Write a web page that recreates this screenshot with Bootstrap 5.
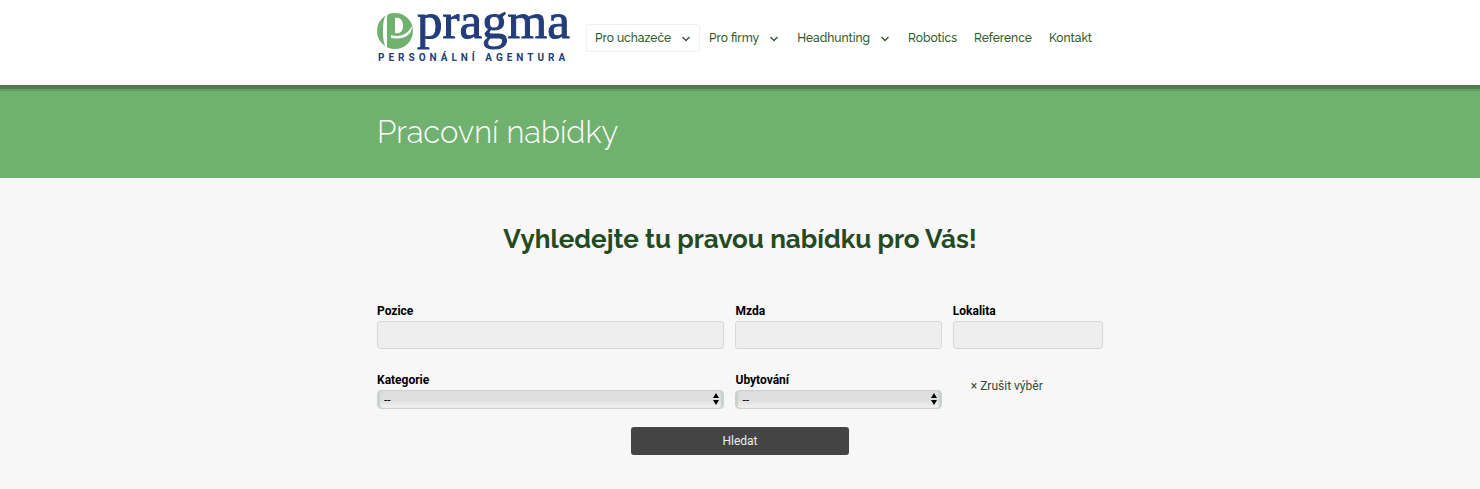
<!DOCTYPE html>
<html lang="cs">
<head>
<meta charset="utf-8">
<meta name="viewport" content="width=device-width, initial-scale=1">
<title>Pracovní nabídky – Pragma</title>
<link href="https://cdn.jsdelivr.net/npm/bootstrap@5.3.0/dist/css/bootstrap.min.css" rel="stylesheet">
<style>
  body { background: #f7f7f7; font-family: Roboto, sans-serif; font-size: 12px; line-height: 20px; color: #000; }
  .page-width { max-width: 726px; }
  .site-header { background: #fff; padding: 12px 0 20px; }
  .site-header svg { overflow: visible; }
  .main-menu { font-family: Raleway, Lato, sans-serif; font-size: 12px; font-weight: 500; }
  .main-menu .nav-link { color: #2f5a2d; padding: 4px 8px 4px 9px; border-radius: 3px; white-space: nowrap; }
  .main-menu .nav-link.active { box-shadow: inset 0 0 0 1px #f0f0f0; }
  .chevron { margin: 0 2px 0 11px; }
  .title-band { background: #70b16f; border-top: 4px solid #507d50; padding: 25px 0 27px; box-shadow: inset 0 2px #649d63; }
  .title-band h1 { font: 300 31px/37px Raleway, Lato, sans-serif; color: #fff; }
  .search-title { font: 700 26px/32px Raleway, Lato, sans-serif; color: #234a22; margin: 45px 0 48px; }
  .search-grid { display: grid; grid-template-columns: 347fr 206fr 150fr; gap: 23px 11px; }
  .form-label { font-weight: 700; line-height: 16px; margin-bottom: 2px; display: block; }
  .field-box { height: 28px; background: #eee; border: 1px solid #d8d8d8; border-radius: 3px; padding: 2px 7px; font-size: 12px; }
  .pick-wrap { position: relative; }
  .pick-box { appearance: none; width: 100%; height: 19px; display: block; padding: 0 6px; font-size: 12px; line-height: 16px; color: #111; border: 1px solid #d0d0d0; border-radius: 4px; background: linear-gradient(#dedede 0 55%, #f3f3f3); box-shadow: inset 2px 0 1px #c9d1cb, inset -2px 0 1px #c9d1cb; }
  .pick-wrap svg { position: absolute; right: 5px; top: 3px; pointer-events: none; }
  .clear-link { color: #324b35; padding: 4px 18px; text-decoration: none; }
  .search-btn { width: 30%; min-width: 160px; height: 28px; padding: 0; background: #444; color: #eee; border: 0; border-radius: 3px; font-size: 12px; line-height: 20px; margin-top: 18px; }
</style>
</head>
<body>
<header class="site-header">
  <div class="container-fluid page-width px-0 d-flex flex-wrap flex-md-nowrap align-items-start">
    <a href="#" class="d-block" aria-label="Pragma personální agentura">
      <svg class="d-block" width="193" height="53" viewBox="0 0 193 53">
        <circle cx="18" cy="19" r="18" fill="#70b16f"/>
        <path d="M11 0C7 5 6 10 6 19s1 14 4 18V6c0-3 1-5 3-6Z" fill="#fff"/>
        <path d="M18 6c5-1 8 2 8 8 0 5-3 8-8 7Z" fill="#fff"/>
        <path d="M14 23c9 3 17-1 21-9 0 10-9 14-21 12Z" fill="#fff"/>
        <text x="40" y="26" font-family="Liberation Serif, serif" font-size="51" fill="#233d7b" stroke="#233d7b" stroke-width="1">pragma</text>
        <text x="1" y="49" font-family="Roboto, sans-serif" font-weight="700" font-size="10" letter-spacing="4" fill="#233d7b">PERSONÁLNÍ AGENTURA</text>
      </svg>
    </a>
    <nav class="main-menu nav flex-md-nowrap ms-3 mt-2 pt-1" aria-label="Hlavní menu">
      <a class="nav-link active" href="#">Pro uchazeče<svg class="chevron" width="8" height="6" viewBox="0 0 8 6" fill="none" stroke="currentColor" stroke-width="1.300"><path d="m.5 1 3.500 3.500L7.500 1"/></svg></a>
      <a class="nav-link" href="#">Pro firmy<svg class="chevron" width="8" height="6" viewBox="0 0 8 6" fill="none" stroke="currentColor" stroke-width="1.300"><path d="m.5 1 3.500 3.500L7.500 1"/></svg></a>
      <a class="nav-link" href="#">Headhunting<svg class="chevron" width="8" height="6" viewBox="0 0 8 6" fill="none" stroke="currentColor" stroke-width="1.300"><path d="m.5 1 3.500 3.500L7.500 1"/></svg></a>
      <a class="nav-link" href="#">Robotics</a>
      <a class="nav-link" href="#">Reference</a>
      <a class="nav-link" href="#">Kontakt</a>
    </nav>
  </div>
</header>
<section class="title-band">
  <div class="container-fluid page-width px-0"><h1 class="m-0">Pracovní nabídky</h1></div>
</section>
<main class="container-fluid page-width px-0">
  <h2 class="search-title text-center">Vyhledejte tu pravou nabídku pro Vás!</h2>
  <form>
    <div class="search-grid">
      <div><label class="form-label" for="pozice">Pozice</label><input class="form-control field-box" id="pozice" type="text"></div>
      <div><label class="form-label" for="mzda">Mzda</label><input class="form-control field-box" id="mzda" type="text"></div>
      <div><label class="form-label" for="lokalita">Lokalita</label><input class="form-control field-box" id="lokalita" type="text"></div>
      <div><label class="form-label" for="kategorie">Kategorie</label>
        <div class="pick-wrap"><select class="pick-box" id="kategorie"><option>--</option></select><svg width="6" height="12" viewBox="0 0 6 12"><path d="m0 5 3-5 3 5ZM0 7l3 5 3-5Z"/></svg></div></div>
      <div><label class="form-label" for="ubytovani">Ubytování</label>
        <div class="pick-wrap"><select class="pick-box" id="ubytovani"><option>--</option></select><svg width="6" height="12" viewBox="0 0 6 12"><path d="m0 5 3-5 3 5ZM0 7l3 5 3-5Z"/></svg></div></div>
      <a class="clear-link" href="#">× Zrušit výběr</a>
    </div>
    <div class="text-center"><button class="btn search-btn" type="submit">Hledat</button></div>
  </form>
</main>
<script src="https://cdn.jsdelivr.net/npm/bootstrap@5.3.0/dist/js/bootstrap.bundle.min.js"></script>
</body>
</html>
